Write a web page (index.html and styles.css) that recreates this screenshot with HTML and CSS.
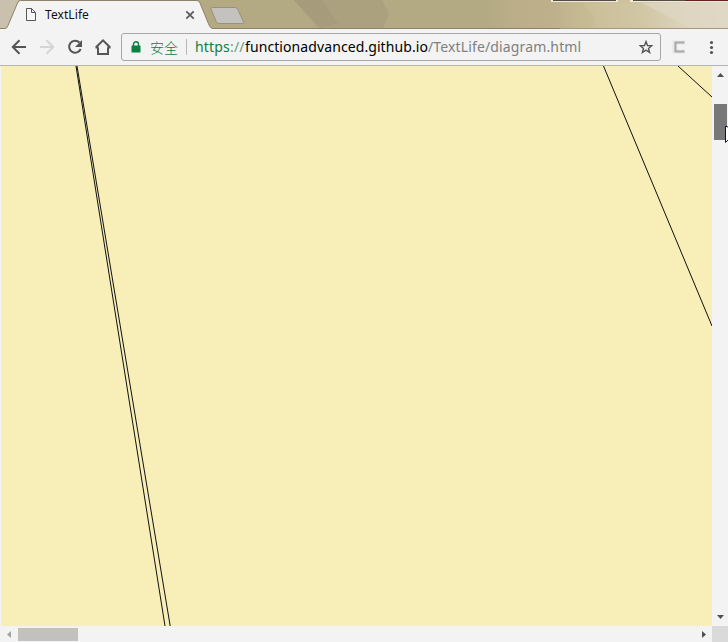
FILE: index.html
```html
<!DOCTYPE html>
<html lang="zh-CN">
<head>
<meta charset="utf-8">
<title>TextLife</title>
<link rel="stylesheet" href="styles.css">
</head>
<body>
<div class="browser">
  <header class="tabstrip">
    <svg class="frame-art" width="728" height="29" viewBox="0 0 728 29">
      <defs>
        <linearGradient id="sky" gradientUnits="userSpaceOnUse" x1="0" y1="0" x2="728" y2="0">
          <stop offset="0" stop-color="#b3a983"/><stop offset=".67" stop-color="#b3a983"/>
          <stop offset=".7" stop-color="#baae88"/><stop offset=".76" stop-color="#bdb08b"/>
          <stop offset=".79" stop-color="#c4b891"/><stop offset=".86" stop-color="#cec29b"/>
          <stop offset=".92" stop-color="#d8cfb5"/><stop offset="1" stop-color="#e1dac7"/>
        </linearGradient>
        <linearGradient id="band" gradientUnits="userSpaceOnUse" x1="580" y1="28" x2="728" y2="0">
          <stop offset="0" stop-color="#c8bd94"/><stop offset=".4" stop-color="#d0c6a3"/>
          <stop offset=".65" stop-color="#dad1b8"/><stop offset="1" stop-color="#e1dbc9"/>
        </linearGradient>
      </defs>
      <path fill="url(#sky)" d="M0 0h728v29H0z"/>
      <path fill="#aca17e" d="M294 0h88l7 14-6 14h-65z"/>
      <path fill="#a69b7a" d="M294 0h28l16 23-17 5z"/>
      <path fill="url(#band)" d="M583 3h145v25H592l3-8z"/>
      <path fill="#ded7c3" d="M642 3h86v25h-38z" opacity=".65"/>
      <path fill="#f1eadb" d="M551 0h67v2h-67zM630 0h98v2h-98z"/>
      <path fill="#544b43" d="M553 0h63v1h-63zM633 0h52v1h-52z"/>
      <path fill="#64221d" d="M685 0h43v1h-43z"/>
      <path fill="#c9c1ae" d="M0 0h19L7 28H0z"/>
      <path fill="#8e8164" d="M0 28h560v1H0z"/>
      <path fill="#a39980" d="M560 28h168v1H560z"/>
      <path fill="#f3f3f3" stroke="#8e8265" d="M0 30v-1.500h5q2 0 3-3L17.500 3q1-2.500 3-2.500H197q2 0 3 2.500l9 22q1.500 3.500 4 3.500V30z"/>
      <path fill="#f3f3f3" d="M0 29h215v1H0z"/>
      <path fill="#c4c2bf" stroke="#99917d" d="M212.500 7.500H235q2 0 2.800 2l6 13q.8 1-1 1H219q-2 0-2.800-2L211 9q-.5-1.500 1.500-1.500z"/>
    </svg>
    <div class="tab">
      <svg class="page-icon" width="12" height="15" viewBox="0 0 12 15"><path fill="#f6f6f6" stroke="#555" d="M1.500 1.500h5l4 4v8h-9zM6.500 1.500v4h4"/></svg>
      <span class="tab-title">TextLife</span>
      <svg width="10" height="10" viewBox="0 0 10 10"><path stroke="#5a5a5a" stroke-width="1.700" d="M1.300 1.300l7.400 7.400M8.700 1.300L1.300 8.700"/></svg>
    </div>
  </header>
  <nav class="toolbar">
    <svg class="nav-icons" width="121" height="36" viewBox="0 29 121 36" fill="none" stroke="#555" stroke-width="2">
      <path d="M12.500 47H26M19.500 40.300L12.800 47l6.700 6.700"/>
      <path stroke="#d5d5d5" d="M40 47h13.500M46.500 40.300l6.700 6.700-6.700 6.700"/>
      <path d="M79.500 42.500A6 6 0 1 0 80.700 49"/><path fill="#555" stroke="none" d="M82 40v7h-7z"/>
      <path d="M98 47.500V54h10v-6.500M95.500 47.500h3M107.500 47.500h3M95.800 47.500L103 40.300l7.200 7.200"/>
    </svg>
    <div class="omnibox">
      <svg class="lock" width="10" height="12" viewBox="0 0 10 12"><path fill="#0b8043" d="M1 4.500h8q.5 0 .5.500v6q0 .5-.5.500H1q-.5 0-.5-.5V5q0-.5.500-.5z"/><path fill="none" stroke="#0b8043" stroke-width="1.400" d="M2.500 5V3.300a2.500 2.500 0 0 1 5 0V5"/></svg>
      <span class="secure">安全</span>
      <span class="divider"></span>
      <span class="url"><span class="scheme">https<i>://</i></span><span class="host">functionadvanced.github.io</span><span class="path">/TextLife/diagram.html</span></span>
      <svg class="star" width="14" height="14" viewBox="0 0 14 14"><path fill="none" stroke="#555" stroke-width="1.400" d="M7 1.600l1.500 3.900 4.300.2-3.300 2.700 1.100 4.100L7 10.200l-3.600 2.300 1.100-4.100L1.200 5.700l4.300-.2z"/></svg>
    </div>
    <svg class="extras" width="67" height="36" viewBox="661 29 67 36">
      <path fill="none" stroke="#e5e5e5" stroke-width="4" d="M685 42.500h-10.500v9H685"/>
      <path fill="none" stroke="#a8a8a8" stroke-width="2" d="M684.500 42.500h-9v9h9"/>
      <circle cx="711.500" cy="42.500" r="1.600" fill="#555"/><circle cx="711.500" cy="47.500" r="1.600" fill="#555"/><circle cx="711.500" cy="52.500" r="1.600" fill="#555"/>
    </svg>
  </nav>
  <main class="viewport">
    <svg class="diagram" width="711" height="560" viewBox="1 66 711 560" fill="none" stroke="#111">
      <path d="M76 66L165 626M77 66L170.200 626M603.500 66L712 326M678 66l34 31"/>
    </svg>
    <div class="vscroll">
      <svg width="7" height="4" viewBox="0 0 7 4"><path fill="#505050" d="M0 4l3.500-4L7 4z"/></svg>
      <div class="vthumb"></div>
      <svg class="down" width="7" height="4" viewBox="0 0 7 4"><path fill="#505050" d="M0 0h7L3.500 4z"/></svg>
    </div>
  </main>
  <footer class="hscroll">
    <svg width="4" height="7" viewBox="0 0 4 7"><path fill="#a3a3a3" d="M4 0v7L0 3.500z"/></svg>
    <div class="hthumb"></div>
    <svg class="right" width="4" height="7" viewBox="0 0 4 7"><path fill="#505050" d="M0 0v7l4-3.500z"/></svg>
    <div class="corner"></div>
  </footer>
  <svg class="cursor" width="3" height="18" viewBox="0 0 3 18"><path fill="#fff" stroke="#10151f" d="M4 1.500L.5 0v16.500L4 13"/></svg>
</div>
</body>
</html>
```
FILE: styles.css
```css
body { margin: 0; overflow: hidden; }
svg { display: block; flex: none; }
.browser {
  position: relative;
  display: flex;
  flex-direction: column;
  width: 728px;
  height: 642px;
  background: #f3f3f3;
  font-family: "Noto Sans", "Noto Sans CJK SC", sans-serif;
}
.tabstrip { position: relative; height: 29px; }
.frame-art { position: absolute; left: 0; top: 0; }
.tab {
  position: relative;
  display: flex;
  align-items: center;
  box-sizing: border-box;
  width: 195px;
  height: 29px;
  padding-left: 25px;
}
.tab-title { flex: 1; margin-left: 8px; font-size: 12px; letter-spacing: .08px; color: #111; }
.toolbar {
  display: flex;
  align-items: center;
  box-sizing: border-box;
  height: 37px;
  border-bottom: 1px solid #b5b5b5;
}
.omnibox {
  display: flex;
  align-items: center;
  box-sizing: border-box;
  width: 540px;
  height: 28px;
  padding: 0 7px 0 9px;
  border: 1px solid #a6a6a6;
  border-radius: 3px;
  background: #f3f3f3;
  font-size: 14px;
  white-space: nowrap;
}
.secure { width: 28px; margin-left: 9px; font-family: "Noto Sans CJK SC", sans-serif; font-weight: 300; line-height: 18px; color: #0b8043; }
.divider { width: 1px; height: 16px; margin: 0 8px; background: #b7b7b7; }
.url { display: flex; flex: 1; margin-top: -1px; }
.url > span { display: block; }
.scheme { width: 50px; letter-spacing: .18px; color: #0b8043; }
.scheme i { color: #6a9a80; font-style: normal; }
.host { width: 183px; letter-spacing: .09px; color: #000; }
.path { letter-spacing: .14px; color: #808080; }
.viewport {
  display: flex;
  height: 560px;
  padding-left: 1px;
}
.diagram { background: #f7eeb8; }
.vscroll {
  display: flex;
  flex-direction: column;
  align-items: center;
  box-sizing: border-box;
  width: 16px;
  padding: 7px 0;
}
.vthumb { width: 13px; height: 36px; margin-top: 27px; background: #787878; }
.down { margin-top: auto; }
.hscroll { display: flex; align-items: center; height: 16px; padding-left: 7px; }
.hthumb { width: 60px; height: 13px; margin-left: 7px; background: #c2c1bf; }
.right { margin-left: auto; }
.corner { width: 16px; height: 16px; margin-left: 6px; background: #dadada; }
.cursor { position: absolute; left: 725px; top: 126px; }
```
